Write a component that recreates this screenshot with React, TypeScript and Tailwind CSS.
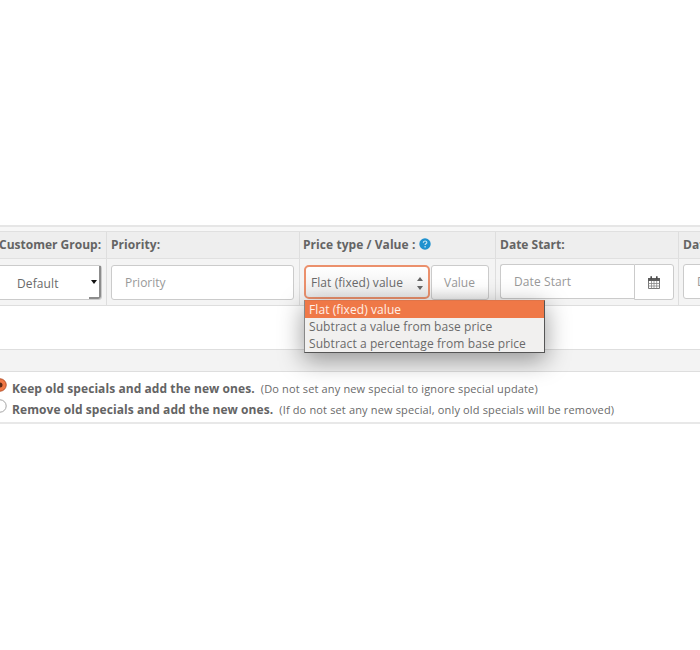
import { clsx } from "clsx";

const PRICE_TYPES = [
  "Flat (fixed) value",
  "Subtract a value from base price",
  "Subtract a percentage from base price",
];

const UPDATE_MODES = [
  {
    title: "Keep old specials and add the new ones.",
    hint: "(Do not set any new special to ignore special update)",
    checked: true,
  },
  {
    title: "Remove old specials and add the new ones.",
    hint: "(If do not set any new special, only old specials will be removed)",
    checked: false,
  },
];

function HelpIcon() {
  return (
    <svg viewBox="0 0 12 12" className="mb-px ml-1 h-3 w-3">
      <circle cx="6" cy="6" r="5.7" fill="#1e91cf" />
      <path
        d="M4.3 4.8C4.3 2.4 7.8 2.5 7.8 4.5C7.8 5.8 6.1 5.8 6.1 7.1M6.1 8.1V9.4"
        fill="none"
        stroke="#c5e4f3"
        strokeWidth="1.2"
      />
    </svg>
  );
}

function CalendarIcon() {
  return (
    <svg viewBox="0 0 12 13" className="h-[13px] w-3">
      <path d="M.5 2.5h11v10H.5z" fill="#fff" stroke="#777" />
      <path d="M0 2h12v3H0z" fill="#5d5d5d" />
      <path d="M.5 7.5h11M.5 10h11M3.5 5v7.5M6 5v7.5M8.7 5v7.5" stroke="#888" strokeWidth=".8" />
      <path d="M3.2.3v3M8.8.3v3" stroke="#4a4a4a" strokeWidth="1.6" />
    </svg>
  );
}

function Radio({ checked }: { checked: boolean }) {
  return (
    <svg viewBox="0 0 14 14" className="-ml-[7px] h-[14px] w-[14px] shrink-0">
      <circle
        cx="7"
        cy="7"
        r="6.2"
        fill={checked ? "#f07746" : "#fff"}
        stroke={checked ? "#b5532d" : "#a5a5a5"}
      />
      {checked && <circle cx="7" cy="7" r="2.5" fill="#5c2a17" />}
    </svg>
  );
}

const cell = "shrink-0 border-r border-[#dedede]";
const field = "flex h-[35px] items-center rounded-[3px] border border-[#cbcbcb] bg-white";

export default function App() {
  return (
    <main className="h-[650px] w-[700px] overflow-hidden bg-white pt-[225px] font-['Open_Sans',sans-serif] text-[12px] text-[#6a6a6a]">
      <div className="h-[6px] border-t-2 border-[#e6e6e6] bg-[#f7f7f7]" />

      {/* Column titles */}
      <div className="flex h-[28px] border-y border-[#e0e0e0] bg-[#eeeeee] font-bold leading-[25px] text-[#646464]">
        <div className={clsx(cell, "w-[107px] whitespace-nowrap")}>
          <span className="-ml-px">Customer Group:</span>
        </div>
        <div className={clsx(cell, "w-[193px] pl-1 tracking-[0.06px]")}>Priority:</div>
        <div className={clsx(cell, "flex w-[196px] items-center pb-px pl-[3px] tracking-[0.06px]")}>
          Price type / Value :<HelpIcon />
        </div>
        <div className={clsx(cell, "w-[183px] pl-1")}>Date Start:</div>
        <div className="shrink-0 pl-1">Date End:</div>
      </div>

      {/* Special row */}
      <div className="flex h-[47px] border-b border-[#dedede] bg-[#f4f4f4] text-[#999]">
        <div className={clsx(cell, "w-[107px] pt-[6px]")}>
          <div className="-ml-[3px] flex h-[35px] w-[105px] items-center rounded-[3px] border border-[#cbcbcb] bg-white pl-[19px] tracking-[0.1px] text-[#6a6a6a]">
            <span className="mt-[2px]">Default</span>
            <span className="ml-auto flex h-[33px] w-3 items-center justify-center rounded-br-[3px] border-r-2 border-b-2 border-[#8c8c8c]">
              <svg viewBox="0 0 6 4" className="h-1 w-[6px]">
                <path d="M0 0h6L3 4z" fill="#111" />
              </svg>
            </span>
          </div>
        </div>
        <div className={clsx(cell, "w-[193px] pt-[6px] pl-1")}>
          <div className={clsx(field, "w-[183px] pl-[13px]")}>Priority</div>
        </div>
        <div className={clsx(cell, "relative flex w-[196px] pt-[6px] pl-1")}>
          <div className="flex h-[34px] w-[126px] items-center rounded-[5px] border-2 border-[#eb906c] bg-linear-to-b from-white to-[#ececec] pl-[5px] tracking-[0.07px] text-[#6a6a6a]">
            <span className="mt-px">Flat (fixed) value</span>
            <svg viewBox="0 0 6 13" className="mt-[3px] mr-[5px] ml-auto h-[13px] w-[6px]">
              <path d="M0 4L3 0l3 4zM0 9h6l-3 4z" fill="#666" />
            </svg>
          </div>
          <div className="ml-px flex h-[35px] w-[58px] items-center rounded-[3px] border border-[#cbcbcb] bg-linear-to-b from-white from-60% to-[#f1f1f1] pl-3">
            Value
          </div>

          {/* Open price type menu */}
          <div className="absolute top-[41px] left-1 z-10 h-[53px] w-[241px] border border-[#555] border-t-[#df7449] border-l-[#888] bg-[#f1f0ef] text-[#6a6a6a] shadow-[0_7px_24px_1px_rgba(0,0,0,0.38)]">
            {PRICE_TYPES.map((type, i) => (
              <div
                key={type}
                className={clsx(
                  "h-[17px] pl-1 leading-[17px] tracking-[0.08px] whitespace-nowrap",
                  i === 0 && "bg-[#ef7847] text-[#fff0e8]"
                )}
              >
                {type}
              </div>
            ))}
          </div>
        </div>
        <div className={clsx(cell, "flex w-[183px] pt-[5px] pl-1")}>
          <div className="flex h-[35px] w-[134px] items-center rounded-l-[3px] border border-r-0 border-[#cbcbcb] bg-white pl-[13px] tracking-[0.1px]">
            Date Start
          </div>
          <div className="flex h-[36px] w-[40px] items-center justify-center rounded-r-[3px] border border-[#cbcbcb] bg-white">
            <CalendarIcon />
          </div>
        </div>
        <div className="shrink-0 pt-[5px] pl-1">
          <div className={clsx(field, "w-[135px] pl-[13px]")}>Date End</div>
        </div>
      </div>

      <div className="h-[43px]" />
      <div className="h-[23px] border-y border-[#dedede] bg-[#f3f3f3]" />

      {/* Update mode */}
      <div className="h-[52px] border-b-2 border-[#e8e8e8] pt-[6px]">
        {UPDATE_MODES.map((mode) => (
          <div key={mode.title} className="flex h-[21px] whitespace-nowrap">
            <Radio checked={mode.checked} />
            <b className="ml-[5px] leading-[21px] tracking-[0.07px] text-[#646464]">{mode.title}</b>
            <span className="ml-[6px] text-[11px] leading-[22px] tracking-[0.15px]">{mode.hint}</span>
          </div>
        ))}
      </div>
    </main>
  );
}
